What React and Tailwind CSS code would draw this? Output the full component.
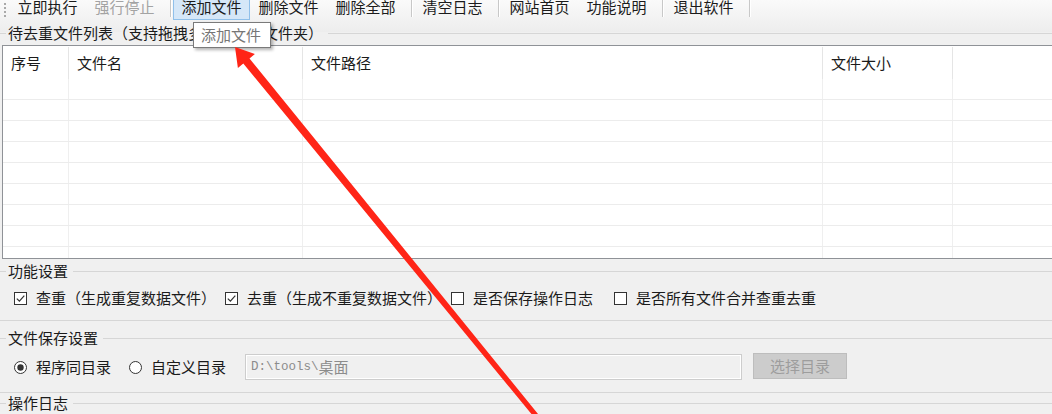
import React from "react";

const font = { fontFamily: '"Microsoft YaHei", "Noto Sans CJK SC", sans-serif' };

const toolbarItems = [
  { label: "立即执行" },
  { label: "强行停止", disabled: true },
  { sep: true },
  { label: "添加文件", hover: true },
  { label: "删除文件" },
  { label: "删除全部" },
  { sep: true },
  { label: "清空日志" },
  { sep: true },
  { label: "网站首页" },
  { label: "功能说明" },
  { sep: true },
  { label: "退出软件" },
  { sep: true },
];

const columns = [
  { title: "序号", w: "w-[66px]" },
  { title: "文件名", w: "w-[234px]" },
  { title: "文件路径", w: "w-[520px]" },
  { title: "文件大小", w: "w-[130px]" },
  { title: "", w: "flex-1" },
];

const GroupTitle = ({ children, className = "" }) => (
  <div className={`flex items-center h-[18px] ${className}`}>
    <div className="w-[6px] h-px bg-[#d6d6d6]" />
    <span className="px-[2px] text-[15px] leading-[18px] text-[#1b1b1b] whitespace-nowrap">
      {children}
    </span>
    <div className="flex-1 h-px bg-[#d6d6d6] ml-[3px]" />
  </div>
);

const CheckBox = ({ checked }) => (
  <svg width="13" height="13" viewBox="0 0 13 13" className="shrink-0">
    <rect x="0.5" y="0.5" width="12" height="12" fill="#fff" stroke="#333" />
    {checked && (
      <path d="M2.8 6.6 L5.4 9.2 L10.3 3.6" fill="none" stroke="#333" strokeWidth="1.2" />
    )}
  </svg>
);

const Radio = ({ checked }) => (
  <svg width="13" height="13" viewBox="0 0 13 13" className="shrink-0">
    <circle cx="6.5" cy="6.5" r="6" fill="#fff" stroke="#333" />
    {checked && <circle cx="6.5" cy="6.5" r="3.2" fill="#333" />}
  </svg>
);

const Option = ({ kind, checked, label, className = "" }) => (
  <div className={`flex items-center ${className}`}>
    {kind === "radio" ? <Radio checked={checked} /> : <CheckBox checked={checked} />}
    <span className="ml-[9px] text-[15px] leading-[20px] text-[#1b1b1b] whitespace-nowrap">
      {label}
    </span>
  </div>
);

const App = () => {
  return (
    <div
      className="relative w-[1052px] h-[414px] overflow-hidden bg-[#f0f0f0]"
      style={font}
    >
      {/* toolbar + list title */}
      <div className="bg-[linear-gradient(to_bottom,#fafafa,#ededed_32px,#f0f0f0_32px)] pb-[3px]">
        <div className="flex h-[21px] overflow-hidden">
          <div className="w-[9px] flex flex-col items-center gap-[2px] pt-[3px]">
            {[0, 1, 2, 3].map((i) => (
              <div key={i} className="w-[2px] h-[2px] bg-[#a9a9a9]" />
            ))}
          </div>
          {toolbarItems.map((item, i) =>
            item.sep ? (
              <div key={i} className="w-[10px] h-[17px] flex pl-[7px]">
                <div className="w-px h-full bg-[#c8c8c8]" />
                <div className="w-px h-full bg-white" />
              </div>
            ) : (
              <div
                key={i}
                className={`w-[77px] h-[26px] -mt-[6px] flex items-center justify-center text-[15px] leading-[20px] border ${
                  item.hover
                    ? "bg-[#d5e7f8] border-[#90c0ea]"
                    : "border-transparent"
                } ${item.disabled ? "text-[#a3a3a3]" : "text-[#1b1b1b]"}`}
              >
                {item.label}
              </div>
            )
          )}
        </div>
        <GroupTitle className="mt-[3px]">
          待去重文件列表（支持拖拽多个文件或文件夹）
        </GroupTitle>
      </div>

      {/* file table */}
      <div className="ml-[2px] w-[1060px] h-[214px] bg-white border-y border-l border-[#8f9297] overflow-hidden">
        <div className="flex h-[33px]">
          {columns.map((c, i) => (
            <div
              key={i}
              className={`${c.w} h-[32px] mt-px flex items-center pl-[8px] text-[15px] text-[#1b1b1b] ${
                i < columns.length - 1 ? "border-r border-[#e5e5e5]" : ""
              }`}
            >
              {c.title}
            </div>
          ))}
        </div>
        {Array.from({ length: 9 }).map((_, r) => (
          <div key={r} className="flex h-[21px] border-b border-[#ececec]">
            {columns.map((c, i) => (
              <div
                key={i}
                className={`${c.w} h-full ${
                  i < columns.length - 1 ? "border-r border-[#efefef]" : ""
                }`}
              />
            ))}
          </div>
        ))}
      </div>

      {/* 功能设置 */}
      <GroupTitle className="mt-[3px]">功能设置</GroupTitle>
      <div className="flex items-center h-[20px] mt-[8px]">
        <Option checked label="查重（生成重复数据文件）" className="ml-[14px]" />
        <Option checked label="去重（生成不重复数据文件）" className="ml-[9px]" />
        <Option label="是否保存操作日志" className="ml-[9px]" />
        <Option label="是否所有文件合并查重去重" className="ml-[21px]" />
      </div>
      <div className="h-px bg-[#d6d6d6] mt-[12px]" />

      {/* 文件保存设置 */}
      <GroupTitle className="mt-[8px]">文件保存设置</GroupTitle>
      <div className="flex items-center h-[28px] mt-[6px]">
        <Option kind="radio" checked label="程序同目录" className="ml-[14px]" />
        <Option kind="radio" label="自定义目录" className="ml-[18px]" />
        <div className="ml-[19px] w-[497px] h-[26px] border border-[#cdcdcd] bg-[#f0f0f0] shadow-[inset_0_0_0_1px_#ffffff] flex items-center pl-[5px] text-[#8c8c8c]">
          <span className="text-[12.5px]" style={{ fontFamily: '"Liberation Mono", monospace' }}>
            D:\tools\
          </span>
          <span className="text-[15px] leading-[20px]">桌面</span>
        </div>
        <div className="ml-[11px] w-[94px] h-[26px] -mt-[2px] bg-[#cccccc] border border-[#bdbdbd] flex items-center justify-center text-[15px] text-[#9d9d9d]">
          选择目录
        </div>
      </div>
      <div className="h-px bg-[#d6d6d6] mt-[11px]" />

      {/* 操作日志 */}
      <GroupTitle className="mt-[1px]">操作日志</GroupTitle>

      {/* tooltip */}
      <div className="absolute left-[193px] top-[22px] w-[78px] h-[26px] bg-white border border-[#7a7a7a] shadow-[2px_2px_3px_rgba(0,0,0,0.3)] flex items-center pl-[7px] text-[15px] text-[#767676]">
        添加文件
      </div>

      {/* red annotation arrow */}
      <svg
        className="absolute left-0 top-0 pointer-events-none"
        width="1052"
        height="414"
        viewBox="0 0 1052 414"
      >
        <polygon
          points="235,47 254.9,54 249.5,58.5 549.7,428.4 545.9,431.6 243.3,63.5 237.9,68"
          fill="#ff2517"
        />
      </svg>
    </div>
  );
};

export default App;
